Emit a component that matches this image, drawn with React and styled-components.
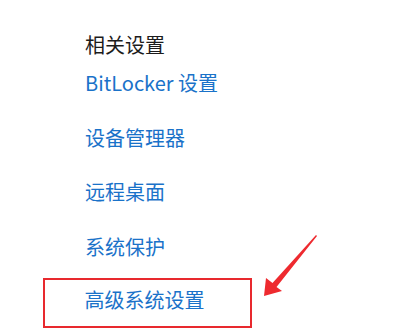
import React from 'react';
import styled, { createGlobalStyle } from 'styled-components';

const GlobalStyle = createGlobalStyle`
	html, body {
		margin: 0;
		padding: 0;
		background: #ffffff;
	}
`;

const Page = styled.div`
	position: relative;
	width: 418px;
	height: 332px;
	overflow: hidden;
	background: #ffffff;
	font-family: 'Noto Sans CJK SC', 'Noto Sans', sans-serif;
	box-sizing: border-box;
	padding: 32px 0 0 85px;
`;

const Heading = styled.div`
	font-size: 20px;
	line-height: 26px;
	color: #1c1c1c;
`;

const LinkList = styled.div`
	display: flex;
	flex-direction: column;
	align-items: flex-start;
	margin-top: 12px;
`;

const LinkItem = styled.a`
	display: block;
	font-size: 20px;
	line-height: 26px;
	color: #1a72c9;
	text-decoration: none;
	white-space: nowrap;
	margin-top: ${(p) => (p.$first ? '0' : '28.5px')};
`;

const Highlight = styled.div`
	box-sizing: border-box;
	width: 209px;
	margin: 18px 0 0 -42px;
	padding: 7.5px 0 12.5px 39.5px;
	border: 2.5px solid #e8292e;

	${LinkItem} {
		margin-top: 0;
	}
`;

const Arrow = styled.svg`
	position: absolute;
	left: 258px;
	top: 230px;
	width: 64px;
	height: 72px;
`;

const links = ['BitLocker 设置', '设备管理器', '远程桌面', '系统保护'];

export default function App() {
	return (
		<Page>
			<GlobalStyle />
			<Heading>相关设置</Heading>
			<LinkList>
				{links.map((text, i) => (
					<LinkItem key={text} $first={i === 0}>
						{text}
					</LinkItem>
				))}
				<Highlight>
					<LinkItem>高级系统设置</LinkItem>
				</Highlight>
			</LinkList>
			{/* annotation arrow pointing at the highlighted link */}
			<Arrow viewBox="0 0 64 72">
				<polygon
					fill="#ee2a2f"
					points="6,66 8,48 14.5,53 58,5 59,6 18.5,57 24,61"
				/>
			</Arrow>
		</Page>
	);
}
